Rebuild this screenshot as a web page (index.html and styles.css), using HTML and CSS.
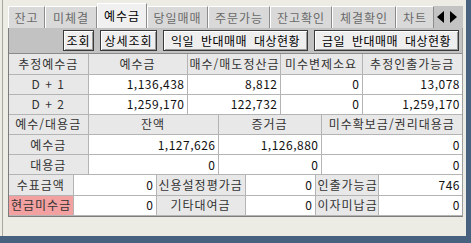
FILE: index.html
```html
<!DOCTYPE html>
<html lang="ko">
<head>
<meta charset="utf-8">
<link rel="stylesheet" href="styles.css">
</head>
<body>
<div class="app">
  <div class="top">
    <div class="main">
      <div class="tabs">
        <div class="tab w37">잔고</div>
        <div class="tab w52">미체결</div>
        <div class="tab active w50">예수금</div>
        <div class="tab w61">당일매매</div>
        <div class="tab w62">주문가능</div>
        <div class="tab w62">잔고확인</div>
        <div class="tab w64">체결확인</div>
        <div class="tab w38">차트</div>
        <div class="arrows"><span class="tri-l"></span><span class="tri-r"></span></div>
      </div>
      <div class="panel">
        <div class="toolbar">
          <button class="btn">조회</button>
          <button class="btn">상세조회</button>
          <button class="btn wide">익일 반대매매 대상현황</button>
          <button class="btn wide">금일 반대매매 대상현황</button>
        </div>
        <table class="grid">
          <colgroup><col class="c79"><col class="c99"><col class="c93"><col class="c82"><col class="c100"></colgroup>
          <tr class="head"><td>추정예수금</td><td>예수금</td><td>매수/매도정산금</td><td>미수변제소요</td><td>추정인출가능금</td></tr>
          <tr><td class="lab">D + 1</td><td class="num">1,136,438</td><td class="num">8,812</td><td class="num">0</td><td class="num">13,078</td></tr>
          <tr><td class="lab">D + 2</td><td class="num">1,259,170</td><td class="num">122,732</td><td class="num">0</td><td class="num">1,259,170</td></tr>
        </table>
        <table class="grid">
          <colgroup><col class="c79"><col class="c130"><col class="c103"><col class="c141"></colgroup>
          <tr class="head"><td>예수/대용금</td><td>잔액</td><td>증거금</td><td>미수확보금/권리대용금</td></tr>
          <tr><td class="lab">예수금</td><td class="num">1,127,626</td><td class="num">1,126,880</td><td class="num">0</td></tr>
          <tr><td class="lab">대용금</td><td class="num">0</td><td class="num">0</td><td class="num">0</td></tr>
        </table>
        <table class="grid">
          <colgroup><col class="c64"><col class="c83"><col class="c89"><col class="c70"><col class="c63"><col class="c84"></colgroup>
          <tr><td class="lab">수표금액</td><td class="num">0</td><td class="lab">신용설정평가금</td><td class="num">0</td><td class="lab">인출가능금</td><td class="num">746</td></tr>
          <tr><td class="lab alert">현금미수금</td><td class="num">0</td><td class="lab">기타대여금</td><td class="num">0</td><td class="lab">이자미납금</td><td class="num">0</td></tr>
        </table>
      </div>
    </div>
    <div class="edge"></div>
  </div>
  <div class="bottombar"></div>
</div>
</body>
</html>
```

FILE: styles.css
```css
* { box-sizing: border-box; }
body {
  margin: 0;
  width: 471px;
  height: 243px;
  overflow: hidden;
  background: #ecebe4;
  font-family: "Noto Sans CJK KR", "Noto Sans", sans-serif;
  font-size: 12px;
  color: #111;
}
.app { display: flex; flex-direction: column; height: 243px; }
.top { display: flex; flex: 1; min-height: 0; }
.main {
  flex: 1;
  margin-left: 2px;
  border-left: 1px solid #a9a89f;
  padding: 3px 3px 0 5px;
}
.edge { width: 5px; background: #47617f; }
.bottombar { height: 7px; background: #47617f; }

.tabs { display: flex; height: 25px; align-items: flex-end; }
.tab {
  height: 22px;
  line-height: 21px;
  text-align: center;
  background: #d9d9d9;
  color: #6a6a6a;
  border-left: 1px solid #ffffff;
  border-right: 1px solid #8c8c8c;
  border-top: 1px solid #ffffff;
  white-space: nowrap;
  letter-spacing: 1px;
}
.tab.active {
  height: 25px;
  line-height: 24px;
  background: #f0f0f0;
  color: #000;
}
.w37 { width: 37px; } .w38 { width: 38px; } .w50 { width: 50px; }
.w52 { width: 52px; } .w61 { width: 61px; } .w62 { width: 62px; } .w64 { width: 64px; }
.arrows {
  flex: 1;
  height: 22px;
  background: #c3c3c3;
  display: flex;
  align-items: center;
  justify-content: center;
  gap: 6px;
  padding-right: 4px;
}
.tri-l, .tri-r { width: 0; height: 0; border-top: 6px solid transparent; border-bottom: 6px solid transparent; }
.tri-l { border-right: 7px solid #000; }
.tri-r { border-left: 7px solid #000; }

.panel { border: 1px solid #7d7d7d; border-top: 0; border-right-color: #a0a0a0; }
.toolbar {
  height: 26px;
  background: #c2c2c2;
  display: flex;
  justify-content: flex-end;
  align-items: center;
  gap: 6px;
  padding: 0 3px 0 0;
  border-bottom: 1px solid #8a8a8a;
}
.btn {
  height: 21px;
  padding: 0 4px;
  font: inherit;
  color: #000;
  background: #eeeeee;
  border: 1px solid #3a3a3a;
  box-shadow: inset 1px 1px #ffffff, inset -1px -1px #9a9a9a;
  letter-spacing: 1px;
  line-height: 17px;
}
.btn:first-child { width: 31px; padding: 0; }
.btn:nth-child(2) { width: 57px; padding: 0; }
.btn.wide { width: 145px; padding: 0; letter-spacing: 0.5px; word-spacing: 3px; }

.grid {
  width: 453px;
  border-collapse: collapse;
  table-layout: fixed;
}
.grid td {
  height: 20px;
  padding: 0 2px;
  border: 1px solid #b4b4b4;
  background: #ffffff;
  white-space: nowrap;
  overflow: hidden;
  line-height: 18px;
}
.grid tr:first-child td { border-top: 0; }
.grid td:first-child { border-left: 0; }
.grid td:last-child { border-right: 0; }
.grid .head td { background: #e8e8e8; text-align: center; color: #333; letter-spacing: 1px; }
.grid .lab { background: #e8e8e8; text-align: center; color: #333; letter-spacing: 1px; }
.grid .num { text-align: right; letter-spacing: 0.5px; }
.grid .alert { background: #f2a0a0; }
.grid + .grid td { border-top: 1px solid #8a8a8a; }
.grid + .grid tr + tr td { border-top: 1px solid #b4b4b4; }

.c64 { width: 64px; } .c70 { width: 70px; } .c79 { width: 79px; } .c82 { width: 82px; }
.c83 { width: 83px; } .c84 { width: 84px; } .c89 { width: 89px; } .c93 { width: 93px; }
.c99 { width: 99px; } .c100 { width: 100px; } .c103 { width: 103px; } .c130 { width: 130px; }
.c141 { width: 141px; } .c63 { width: 63px; }
```
